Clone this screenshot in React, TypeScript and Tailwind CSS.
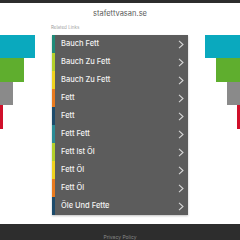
import React from "react";

const items: { label: string; color: string }[] = [
  { label: "Bauch Fett", color: "#1f8a78" },
  { label: "Bauch Zu Fett", color: "#b3cf2a" },
  { label: "Bauch Zu Fett", color: "#f0d21e" },
  { label: "Fett", color: "#e87a1e" },
  { label: "Fett", color: "#1c4a6a" },
  { label: "Fett Fett", color: "#2a8a94" },
  { label: "Fett Ist Öl", color: "#b3cf2a" },
  { label: "Fett Öl", color: "#f0d21e" },
  { label: "Fett Öl", color: "#e87a1e" },
  { label: "Öle Und Fette", color: "#1c4a6a" },
];

function Chevron() {
  return (
    <svg width="6" height="9" viewBox="0 0 6 9" fill="none">
      <path d="M1 0.8 L5 4.5 L1 8.2" stroke="#d6d6d6" strokeWidth="1.1" />
    </svg>
  );
}

export default function App() {
  return (
    <div
      className="w-[240px] h-[240px] flex flex-col bg-white overflow-hidden"
      style={{ fontFamily: "Inter, 'Noto Sans', sans-serif" }}
    >
      <div className="h-[3px] bg-[#2d2d2d]" />
      <div className="flex-1 flex">
        <div className="w-[52px] pt-[32px] flex flex-col items-start">
          <div className="w-[35px] h-[23px] bg-[#0aa9be]" />
          <div className="w-[24px] h-[24px] bg-[#5fae2e]" />
          <div className="w-[13px] h-[23px] bg-[#8a8a8a]" />
          <div className="w-[3px] h-[24px] bg-[#d0102a]" />
        </div>
        <div className="w-[136px] flex flex-col">
          <div className="mt-[5px] h-[12px] leading-[12px] text-[7.5px] text-[#5a5a5a] text-center">
            stafettvasan.se
          </div>
          <div className="mt-[4px] h-[8px] leading-[8px] text-[4.5px] text-[#a0a0a0] -ml-[1px]">
            Related Links
          </div>
          <div className="mt-[3px] flex flex-col bg-[#5c5c5c] shadow-[0_1px_2px_rgba(0,0,0,0.25)]">
            {items.map((it, i) => (
              <div
                key={i}
                className="h-[18px] flex items-center border-l-[3px] pl-[6px] pr-[4px]"
                style={{ borderLeftColor: it.color }}
              >
                <span className="flex-1 text-[7.5px] font-medium text-[#f2f2f2]">{it.label}</span>
                <Chevron />
              </div>
            ))}
          </div>
        </div>
        <div className="w-[52px] pt-[32px] flex flex-col items-end">
          <div className="w-[35px] h-[23px] bg-[#0aa9be]" />
          <div className="w-[24px] h-[24px] bg-[#5fae2e]" />
          <div className="w-[13px] h-[23px] bg-[#8a8a8a]" />
          <div className="w-[3px] h-[24px] bg-[#d0102a]" />
        </div>
      </div>
      <div className="h-[16px] bg-[#2d2d2d] flex justify-center pt-[10px]">
        <span className="text-[5px] leading-[6px] text-[#8a8a8a]">Privacy Policy</span>
      </div>
    </div>
  );
}
